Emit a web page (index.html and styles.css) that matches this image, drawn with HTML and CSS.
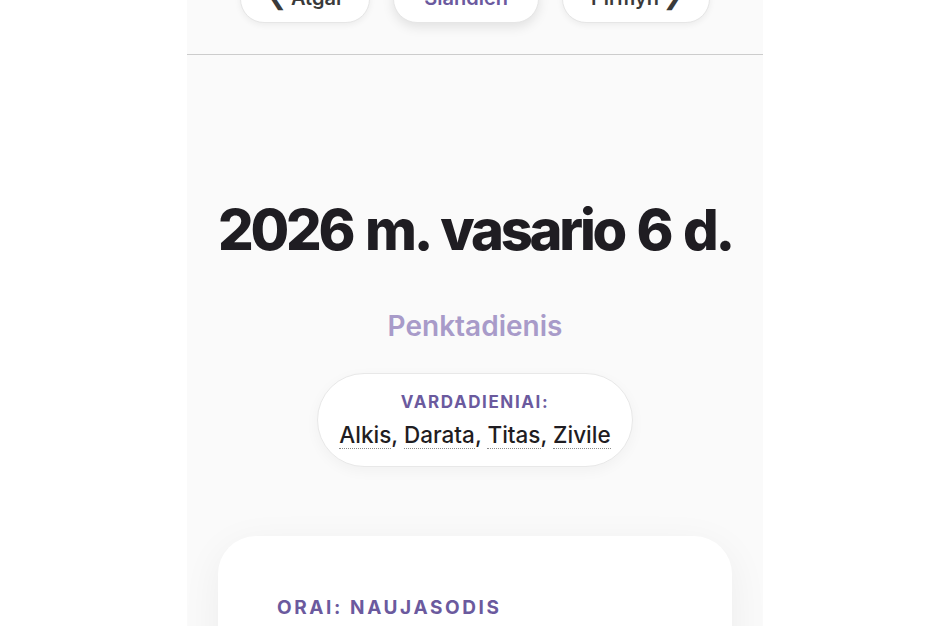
FILE: index.html
```html
<!DOCTYPE html>
<html lang="lt">
<head>
    <meta charset="UTF-8">
    <meta name="viewport" content="width=device-width, initial-scale=1.0">
    <title>Kalendorius</title>
    <link rel="stylesheet" href="styles.css">
</head>
<body>

    <div class="page">
        <div class="nav">
            <button class="nav-btn">&#10094; Atgal</button>
            <button class="nav-btn nav-today">Šiandien</button>
            <button class="nav-btn">Pirmyn &#10095;</button>
        </div>

        <div class="day">
            <h1 class="date">2026 m. vasario 6 d.</h1>
            <div class="weekday">Penktadienis</div>

            <div class="namedays">
                <div class="namedays-title">Vardadieniai:</div>
                <div class="namedays-list">
                    <span class="name">Alkis</span>, <span class="name">Darata</span>, <span class="name">Titas</span>, <span class="name">Zivile</span>
                </div>
            </div>

            <div class="card">
                <div class="card-title">Orai: Naujasodis</div>
            </div>
        </div>
    </div>

</body>
</html>
```

FILE: styles.css
```css
* {
    margin: 0;
    padding: 0;
    box-sizing: border-box;
}

body {
    font-family: 'Inter', 'Liberation Sans', sans-serif;
    background-color: #ffffff;
    color: #1f1d22;
    overflow: hidden;
}

.page {
    width: 576px;
    margin: 0 auto;
    background-color: #fafafa;
    min-height: 100vh;
}

.nav {
    display: flex;
    justify-content: center;
    gap: 23px;
    margin-top: -27px;
    padding-bottom: 31px;
    border-bottom: 1px solid #cccccc;
}

.nav-btn {
    height: 50px;
    padding: 0 28px;
    font-family: inherit;
    font-size: 20px;
    font-weight: 600;
    color: #3a3a3a;
    background-color: #ffffff;
    border: 1px solid #e6e6e6;
    border-radius: 24px;
    box-shadow: 0 2px 6px rgba(0, 0, 0, 0.06);
    cursor: pointer;
}

.nav-today {
    color: #6b5a9e;
    padding: 0 30px;
    box-shadow: 0 4px 12px rgba(0, 0, 0, 0.1);
}

.day {
    display: flex;
    flex-direction: column;
    align-items: center;
    padding-top: 142px;
    text-align: center;
}

.date {
    font-size: 56px;
    font-weight: 800;
    line-height: 1.2;
    letter-spacing: -3.2px;
    word-spacing: 3.5px;
    color: #1f1d22;
}

.weekday {
    margin-top: 45px;
    font-size: 28px;
    font-weight: 600;
    color: #a89bc9;
}

.namedays {
    margin-top: 30px;
    padding: 18px 21px 18px;
    background-color: #ffffff;
    border: 1px solid #e8e8e8;
    border-radius: 50px;
    box-shadow: 0 4px 14px rgba(0, 0, 0, 0.04);
}

.namedays-title {
    font-size: 17px;
    font-weight: 700;
    letter-spacing: 1.6px;
    text-transform: uppercase;
    color: #6b5a9e;
}

.namedays-list {
    margin-top: 9px;
    font-size: 22.5px;
    font-weight: 500;
    color: #1f1d22;
}

.name {
    border-bottom: 1px dotted #8a8a8a;
}

.card {
    align-self: stretch;
    margin: 69px 31px 0;
    height: 200px;
    padding: 60px 59px;
    text-align: left;
    background-color: #ffffff;
    border-radius: 38px;
    box-shadow: 0 10px 40px rgba(0, 0, 0, 0.06);
}

.card-title {
    font-size: 19px;
    font-weight: 700;
    letter-spacing: 2.6px;
    text-transform: uppercase;
    color: #6b5a9e;
}
```
